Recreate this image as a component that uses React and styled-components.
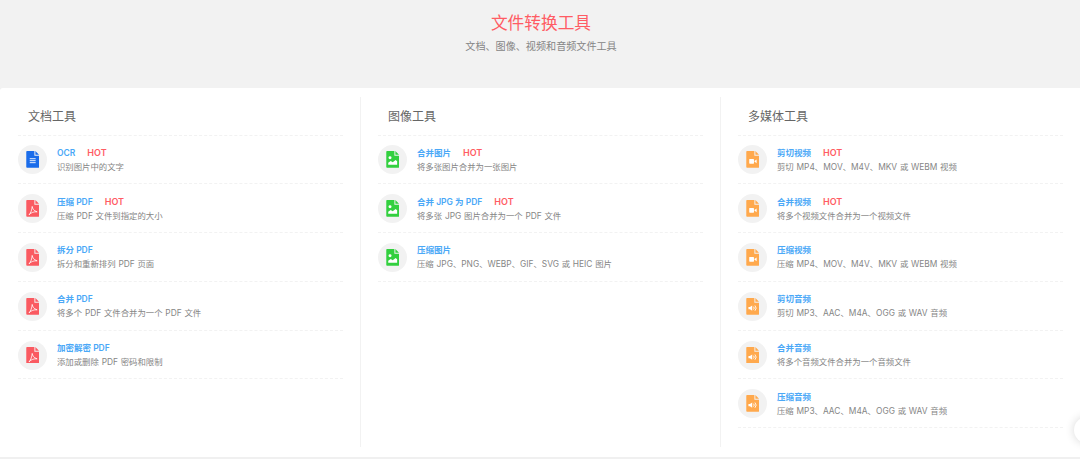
import React from 'react'
import styled, { createGlobalStyle } from 'styled-components'

const GlobalStyle = createGlobalStyle`
  html, body {
    margin: 0;
    padding: 0;
    background: #f0f0f0;
  }
  body {
    font-family: 'Inter', 'Noto Sans CJK SC', sans-serif;
    overflow: hidden;
  }
`

const Page = styled.div`
  position: relative;
  width: 1080px;
  height: 459px;
  overflow: hidden;
`

const Header = styled.header`
  height: 88px;
  box-sizing: border-box;
  padding: 12px 0 0 2px;
  text-align: center;
  background: #f2f2f2;
`

const Title = styled.h1`
  margin: 0;
  font-size: 16.7px;
  line-height: 23px;
  font-weight: 400;
  color: #ff5c64;
`

const Subtitle = styled.p`
  margin: 3px 0 0;
  font-size: 10.1px;
  line-height: 16px;
  color: #858585;
`

const Main = styled.main`
  display: grid;
  grid-template-columns: repeat(3, 1fr);
  height: 369px;
  box-sizing: border-box;
  padding: 9px 0 10px;
  background: #fff;
  border-radius: 3px 0 0 0;
`

const Column = styled.section`
  box-sizing: border-box;
  padding: 0 17px 0 ${p => (p.$first ? '18px' : '17px')};
  border-left: ${p => (p.$first ? 'none' : '1px solid #f2f2f2')};
`

const ColumnTitle = styled.h2`
  margin: 0;
  height: 38.5px;
  box-sizing: border-box;
  padding: 11px 0 0 10px;
  font-size: 12px;
  line-height: 17px;
  font-weight: 400;
  color: #666;
  border-bottom: 1px dashed #f2f2f2;
`

const Item = styled.div`
  display: flex;
  align-items: center;
  height: 48.8px;
  box-sizing: border-box;
  padding-top: 1px;
  border-bottom: 1px dashed #f2f2f2;
`

const IconWrap = styled.div`
  display: flex;
  align-items: center;
  justify-content: center;
  flex: none;
  width: 29px;
  height: 29px;
  margin-right: 10px;
  border-radius: 50%;
  background: #f2f2f2;
`

const Body = styled.div`
  min-width: 0;
`

const NameRow = styled.div`
  display: flex;
  gap: 12px;
  font-size: 8.5px;
  line-height: 14px;
  font-weight: 600;
`

const Name = styled.span`
  color: #4aa8f7;
`

const Hot = styled.span`
  font-size: 9px;
  color: #ff5c64;
`

const Desc = styled.div`
  font-size: 8.4px;
  line-height: 14px;
  word-spacing: 0.4px;
  color: #858585;
`

const ScrollTop = styled.div`
  position: absolute;
  left: 1074px;
  top: 417px;
  width: 26px;
  height: 26px;
  border-radius: 50%;
  background: #fff;
  box-shadow: 0 0 10px rgba(0, 0, 0, 0.16);
`

const FileBase = ({ color, children }) => (
  <svg width="13.400" height="16.800" viewBox="0 0 13 17">
    <path d="M.8 0H8.200V4.800H13V16.200a.8.8 0 0 1-.8.8H.8a.8.8 0 0 1-.8-.8V.8A.8.8 0 0 1 .8 0Z" fill={color} />
    <path d="M9.200 0L13 3.800H9.200Z" fill={color} />
    {children}
  </svg>
)

const DocIcon = () => (
  <FileBase color="#1a6cea">
    <path d="M3.500 7.800h6M3.500 9.800h6M3.500 11.800h6" stroke="#fff" strokeWidth=".9" />
  </FileBase>
)

const PdfIcon = () => (
  <FileBase color="#fa5a61">
    <path
      d="M6 6.500c.3 2.300 1.400 4.300 5 5.500-3-.3-6 .5-8.200 3C4.600 13 5.700 10 6 6.500Z"
      fill="none"
      stroke="#fff"
      strokeWidth=".8"
    />
  </FileBase>
)

const ImageIcon = () => (
  <FileBase color="#33d03f">
    <circle cx="3.800" cy="6.800" r="1.500" fill="#fff" />
    <path d="M2 14V12L4.500 10 6.500 11.500 9.500 9 11 10.500V14Z" fill="#fff" />
  </FileBase>
)

const VideoIcon = () => (
  <FileBase color="#ffa94d">
    <rect x="3" y="8" width="4.800" height="4.800" rx=".6" fill="#fff" />
    <path d="M8.200 10.200L10.500 8.500V12.300L8.200 10.600Z" fill="#fff" />
  </FileBase>
)

const AudioIcon = () => (
  <FileBase color="#ffa94d">
    <path d="M2.200 9.200h1.500L6 7.500V13L3.700 11.300H2.200Z" fill="#fff" />
    <path d="M7.300 8.800a2 2 0 0 1 0 2.900M8.800 7.600a4 4 0 0 1 0 5.300" fill="none" stroke="#fff" strokeWidth=".9" />
  </FileBase>
)

const columns = [
  {
    title: '文档工具',
    items: [
      { icon: DocIcon, name: 'OCR', hot: true, desc: '识别图片中的文字' },
      { icon: PdfIcon, name: '压缩 PDF', hot: true, desc: '压缩 PDF 文件到指定的大小' },
      { icon: PdfIcon, name: '拆分 PDF', desc: '拆分和重新排列 PDF 页面' },
      { icon: PdfIcon, name: '合并 PDF', desc: '将多个 PDF 文件合并为一个 PDF 文件' },
      { icon: PdfIcon, name: '加密解密 PDF', desc: '添加或删除 PDF 密码和限制' },
    ],
  },
  {
    title: '图像工具',
    items: [
      { icon: ImageIcon, name: '合并图片', hot: true, desc: '将多张图片合并为一张图片' },
      { icon: ImageIcon, name: '合并 JPG 为 PDF', hot: true, desc: '将多张 JPG 图片合并为一个 PDF 文件' },
      { icon: ImageIcon, name: '压缩图片', desc: '压缩 JPG、PNG、WEBP、GIF、SVG 或 HEIC 图片' },
    ],
  },
  {
    title: '多媒体工具',
    items: [
      { icon: VideoIcon, name: '剪切视频', hot: true, desc: '剪切 MP4、MOV、M4V、MKV 或 WEBM 视频' },
      { icon: VideoIcon, name: '合并视频', hot: true, desc: '将多个视频文件合并为一个视频文件' },
      { icon: VideoIcon, name: '压缩视频', desc: '压缩 MP4、MOV、M4V、MKV 或 WEBM 视频' },
      { icon: AudioIcon, name: '剪切音频', desc: '剪切 MP3、AAC、M4A、OGG 或 WAV 音频' },
      { icon: AudioIcon, name: '合并音频', desc: '将多个音频文件合并为一个音频文件' },
      { icon: AudioIcon, name: '压缩音频', desc: '压缩 MP3、AAC、M4A、OGG 或 WAV 音频' },
    ],
  },
]

export default function App() {
  return (
    <Page>
      <GlobalStyle />
      <Header>
        <Title>文件转换工具</Title>
        <Subtitle>文档、图像、视频和音频文件工具</Subtitle>
      </Header>
      <Main>
        {columns.map((col, i) => (
          <Column key={col.title} $first={i === 0}>
            <ColumnTitle>{col.title}</ColumnTitle>
            {col.items.map(item => (
              <Item key={item.name}>
                <IconWrap>
                  <item.icon />
                </IconWrap>
                <Body>
                  <NameRow>
                    <Name>{item.name}</Name>
                    {item.hot && <Hot>HOT</Hot>}
                  </NameRow>
                  <Desc>{item.desc}</Desc>
                </Body>
              </Item>
            ))}
          </Column>
        ))}
      </Main>
      <ScrollTop />
    </Page>
  )
}
